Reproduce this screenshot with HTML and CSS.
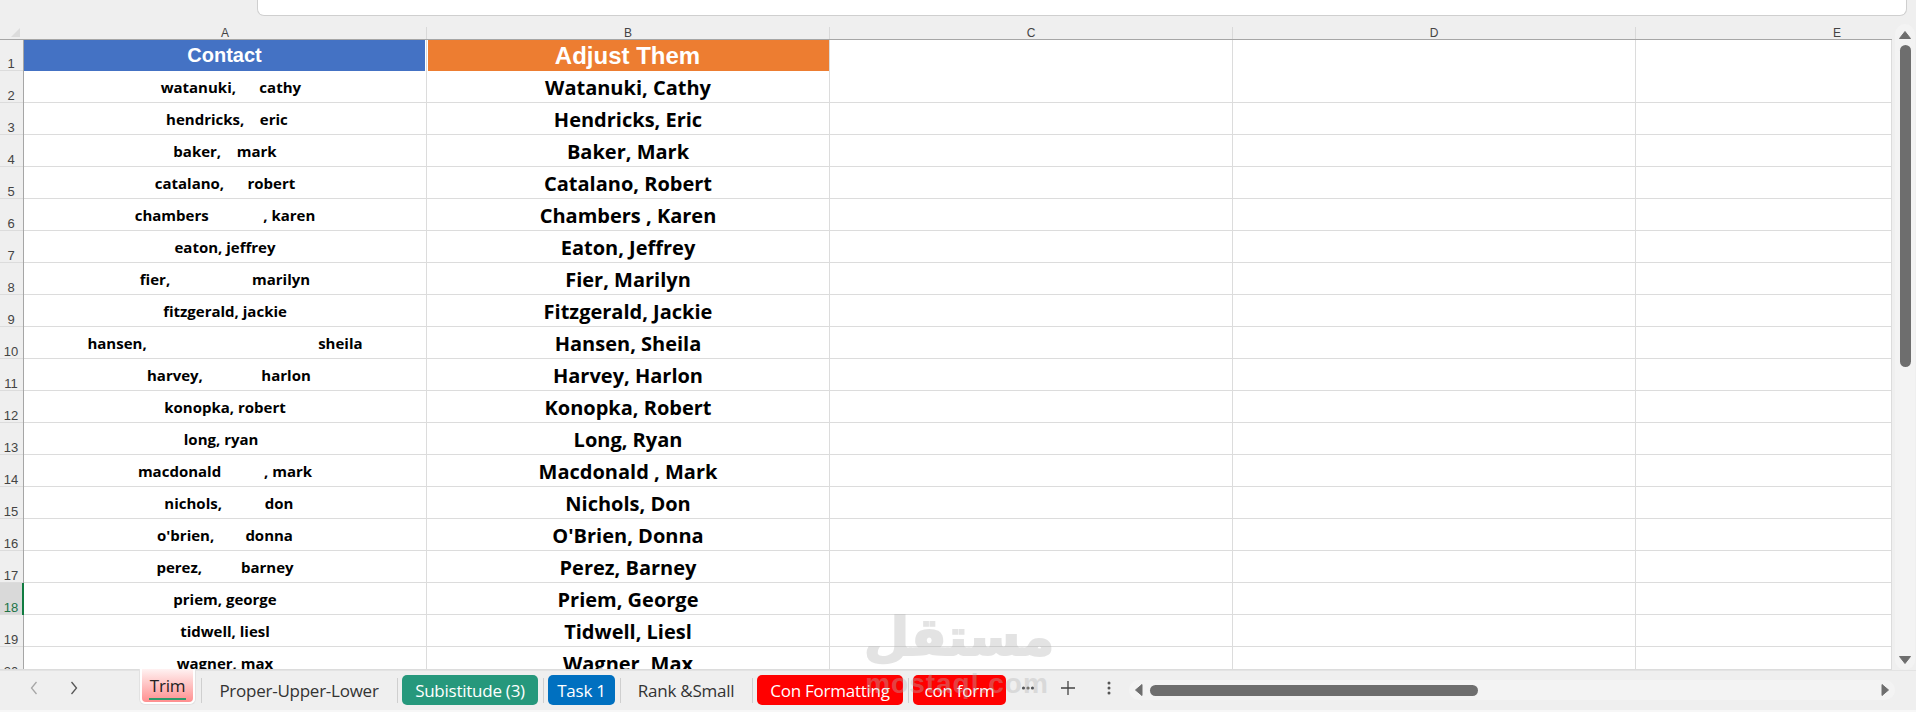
FILE: index.html
```html
<!DOCTYPE html>
<html lang="en">
<head>
<meta charset="utf-8">
<title>Trim</title>
<link rel="stylesheet" href="styles.css">
</head>
<body>
<div class="app">
  <div class="formula-box"></div>
  <div class="sheet">
    <div class="grid">
      <div class="col-heads">
        <div class="corner"><span class="corner-tri"></span></div>
        <div class="col-head">A</div>
        <div class="col-head">B</div>
        <div class="col-head">C</div>
        <div class="col-head">D</div>
        <div class="col-head col-last">E</div>
      </div>
      <div class="rows">
        <div class="row row-first"><div class="num">1</div><div class="cell"><span class="title title-blue">Contact</span></div><div class="cell"><span class="title title-orange">Adjust Them</span></div><div class="cell"></div><div class="cell"></div><div class="cell cell-last"></div></div>
        <div class="row"><div class="num">2</div><div class="cell raw">   watanuki,      cathy</div><div class="cell fixed">Watanuki, Cathy</div><div class="cell"></div><div class="cell"></div><div class="cell cell-last"></div></div>
        <div class="row"><div class="num">3</div><div class="cell raw"> hendricks,    eric</div><div class="cell fixed">Hendricks, Eric</div><div class="cell"></div><div class="cell"></div><div class="cell cell-last"></div></div>
        <div class="row"><div class="num">4</div><div class="cell raw">baker,    mark</div><div class="cell fixed">Baker, Mark</div><div class="cell"></div><div class="cell"></div><div class="cell cell-last"></div></div>
        <div class="row"><div class="num">5</div><div class="cell raw">catalano,      robert</div><div class="cell fixed">Catalano, Robert</div><div class="cell"></div><div class="cell"></div><div class="cell cell-last"></div></div>
        <div class="row"><div class="num">6</div><div class="cell raw">chambers              , karen</div><div class="cell fixed">Chambers , Karen</div><div class="cell"></div><div class="cell"></div><div class="cell cell-last"></div></div>
        <div class="row"><div class="num">7</div><div class="cell raw">eaton, jeffrey</div><div class="cell fixed">Eaton, Jeffrey</div><div class="cell"></div><div class="cell"></div><div class="cell cell-last"></div></div>
        <div class="row"><div class="num">8</div><div class="cell raw">fier,                     marilyn</div><div class="cell fixed">Fier, Marilyn</div><div class="cell"></div><div class="cell"></div><div class="cell cell-last"></div></div>
        <div class="row"><div class="num">9</div><div class="cell raw">fitzgerald, jackie</div><div class="cell fixed">Fitzgerald, Jackie</div><div class="cell"></div><div class="cell"></div><div class="cell cell-last"></div></div>
        <div class="row"><div class="num">10</div><div class="cell raw">hansen,                                            sheila</div><div class="cell fixed">Hansen, Sheila</div><div class="cell"></div><div class="cell"></div><div class="cell cell-last"></div></div>
        <div class="row"><div class="num">11</div><div class="cell raw">  harvey,               harlon</div><div class="cell fixed">Harvey, Harlon</div><div class="cell"></div><div class="cell"></div><div class="cell cell-last"></div></div>
        <div class="row"><div class="num">12</div><div class="cell raw">konopka, robert</div><div class="cell fixed">Konopka, Robert</div><div class="cell"></div><div class="cell"></div><div class="cell cell-last"></div></div>
        <div class="row"><div class="num">13</div><div class="cell raw">long, ryan  </div><div class="cell fixed">Long, Ryan</div><div class="cell"></div><div class="cell"></div><div class="cell cell-last"></div></div>
        <div class="row"><div class="num">14</div><div class="cell raw">macdonald           , mark</div><div class="cell fixed">Macdonald , Mark</div><div class="cell"></div><div class="cell"></div><div class="cell cell-last"></div></div>
        <div class="row"><div class="num">15</div><div class="cell raw">  nichols,           don</div><div class="cell fixed">Nichols, Don</div><div class="cell"></div><div class="cell"></div><div class="cell cell-last"></div></div>
        <div class="row"><div class="num">16</div><div class="cell raw">o'brien,        donna</div><div class="cell fixed">O'Brien, Donna</div><div class="cell"></div><div class="cell"></div><div class="cell cell-last"></div></div>
        <div class="row"><div class="num">17</div><div class="cell raw">perez,          barney</div><div class="cell fixed">Perez, Barney</div><div class="cell"></div><div class="cell"></div><div class="cell cell-last"></div></div>
        <div class="row"><div class="num num-selected">18</div><div class="cell raw">priem, george</div><div class="cell fixed">Priem, George</div><div class="cell"></div><div class="cell"></div><div class="cell cell-last"></div></div>
        <div class="row"><div class="num">19</div><div class="cell raw">tidwell, liesl</div><div class="cell fixed">Tidwell, Liesl</div><div class="cell"></div><div class="cell"></div><div class="cell cell-last"></div></div>
        <div class="row"><div class="num">20</div><div class="cell raw">wagner, max</div><div class="cell fixed">Wagner, Max</div><div class="cell"></div><div class="cell"></div><div class="cell cell-last"></div></div>
      </div>
    </div>
    <div class="vscroll">
      <svg class="arrow" width="12" height="8" viewBox="0 0 12 8"><path d="M6 .5 11.5 7.5H.5Z" fill="#6e6e6e" stroke="#6e6e6e" stroke-linejoin="round"/></svg>
      <div class="vtrack"><div class="vthumb"></div></div>
      <svg class="arrow" width="12" height="8" viewBox="0 0 12 8"><path d="M.5 .5H11.5L6 7.5Z" fill="#6e6e6e" stroke="#6e6e6e" stroke-linejoin="round"/></svg>
    </div>
  </div>
  <div class="tabbar">
    <div class="nav">
      <svg width="10" height="16" viewBox="0 0 10 16"><path d="M7.5 2 2.5 8l5 6" fill="none" stroke="#a6a6a6" stroke-width="1.3"/></svg>
      <svg width="10" height="16" viewBox="0 0 10 16"><path d="M2.5 2l5 6-5 6" fill="none" stroke="#555" stroke-width="1.3"/></svg>
    </div>
    <div class="tabs">
      <div class="tab-active"><span class="tab-active-label">Trim</span></div>
      <span class="sep"></span>
      <div class="tab tab-plain tab-proper">Proper-Upper-Lower</div>
      <span class="sep"></span>
      <div class="tab tab-green">Subistitude (3)</div>
      <span class="sep"></span>
      <div class="tab tab-blue">Task 1</div>
      <span class="sep"></span>
      <div class="tab tab-plain tab-rank">Rank &amp;Small</div>
      <span class="sep"></span>
      <div class="tab tab-red tab-cf">Con Formatting</div>
      <span class="sep"></span>
      <div class="tab tab-red tab-form">con form</div>
    </div>
    <div class="tab-tools">
      <svg class="tool-more" width="14" height="4" viewBox="0 0 14 4"><g fill="#555"><circle cx="2.5" cy="2" r="1.6"/><circle cx="7" cy="2" r="1.6"/><circle cx="11.5" cy="2" r="1.6"/></g></svg>
      <svg class="tool-add" width="14" height="14" viewBox="0 0 14 14"><path d="M7 0v14M0 7h14" stroke="#444" stroke-width="1.3"/></svg>
      <svg class="tool-menu" width="4" height="14" viewBox="0 0 4 14"><g fill="#555"><circle cx="2" cy="2" r="1.5"/><circle cx="2" cy="7" r="1.5"/><circle cx="2" cy="12" r="1.5"/></g></svg>
    </div>
    <div class="hscroll">
      <svg width="8" height="12" viewBox="0 0 8 12"><path d="M7 .5V11.5L.5 6Z" fill="#6e6e6e" stroke="#6e6e6e" stroke-linejoin="round"/></svg>
      <div class="htrack"><div class="hthumb"></div></div>
      <svg width="8" height="12" viewBox="0 0 8 12"><path d="M1 .5V11.5L7.5 6Z" fill="#6e6e6e" stroke="#6e6e6e" stroke-linejoin="round"/></svg>
    </div>
  </div>
  <div class="status-edge"></div>
  <div class="watermark"><div class="wm-ar">مستقل</div><div class="wm-en">mostaql.com</div></div>
</div>
</body>
</html>
```

FILE: styles.css
```css
* { box-sizing: border-box; }
html, body { margin: 0; height: 100%; }
body { overflow: hidden; background: #efefef; font-family: "Open Sans", "Liberation Sans", sans-serif; }
.app { position: relative; width: 1916px; height: 712px; display: flex; flex-direction: column; }

.formula-box { height: 16px; margin: 0 9px 0 257px; flex: none; background: #fff; border: 1px solid #cfcfcf; border-top: 0; border-radius: 0 0 7px 7px; }

.sheet { display: flex; height: 646px; margin-top: 8px; flex: none; }
.grid { width: 1892px; display: flex; flex-direction: column; padding-top: 3px; min-height: 0; }

.col-heads { display: flex; height: 13px; flex: none; border-bottom: 1px solid #a6a6a6; }
.corner { width: 24px; flex: none; display: flex; justify-content: flex-end; padding: 1px 4px 0 0; }
.corner-tri { width: 0; height: 0; border-style: solid; border-width: 0 0 9px 9px; border-color: transparent transparent #dcdcdc transparent; }
.col-head { width: 403px; flex: none; text-align: center; font: 12px/12px "Liberation Sans", sans-serif; color: #444; border-right: 1px solid #d9d9d9; }
.col-last { flex: 1; width: auto; border-right: 0; text-align: left; padding-left: 197px; }

.rows { flex: 1; min-height: 0; overflow: hidden; border-bottom: 1px solid #dcdcdc; }
.row { display: flex; height: 32px; }
.row-first { height: 31px; }
.num { width: 24px; flex: none; border-right: 1px solid #a6a6a6; background: #efefef; font: 13px/14px "Liberation Sans", sans-serif; color: #444; display: flex; align-items: flex-end; justify-content: center; padding: 0 1px 0 0; box-shadow: inset 0 -1px 0 #dcdcdc; }
.num-selected { background: #d9d9d9; color: #217346; border-right: 2px solid #107c41; padding-right: 0; }
.cell { width: 403px; flex: none; background: #fff; border-right: 1px solid #dcdcdc; border-bottom: 1px solid #dcdcdc; display: flex; align-items: center; justify-content: center; white-space: pre; color: #000; font-weight: 700; }
.cell-last { flex: 1; }
.raw { font-size: 15px; }
.fixed { font-size: 20px; padding-top: 1px; }
.row-first .cell { border-bottom: 0; }
.title { display: flex; align-items: center; justify-content: center; height: 100%; width: 100%; color: #fff; font-family: "Liberation Sans", sans-serif; font-weight: 700; }
.title-blue { background: #4472c4; font-size: 20px; margin-right: 1px; }
.title-orange { background: #ed7d31; font-size: 24px; margin-left: 1px; padding-right: 2px; }

.vscroll { width: 20px; margin-left: 3px; background: #f3f3f3; border-radius: 10px; display: flex; flex-direction: column; align-items: center; padding: 7px 0 6px; }
.vscroll .arrow { flex: none; }
.vtrack { flex: 1; width: 100%; padding: 6px 4px 0; min-height: 0; }
.vthumb { width: 11px; margin: 0 auto; height: 322px; background: #6e6e6e; border-radius: 6px; }

.tabbar { height: 40px; flex: none; display: flex; align-items: flex-start; background: #efefef; border-top: 1px solid #e3e3e3; position: relative; }
.nav { width: 139px; flex: none; display: flex; padding: 9px 0 0 29px; gap: 30px; }
.tabs { display: flex; align-items: flex-end; flex: none; height: 34px; }
.tab-active { width: 57px; height: 36px; margin-top: -2px; padding: 0 2px 2px; background: #fff; border: 1px solid #e2e2e2; border-top: 0; border-radius: 0 0 6px 6px; display: flex; flex: none; }
.tab-active-label { flex: 1; border-radius: 0 0 4px 4px; background: linear-gradient(#fff2f2, #ff8f8f); font-size: 17px; line-height: 33px; text-align: center; color: #222; position: relative; letter-spacing: -.25px; }
.tab-active-label::after { content: ""; position: absolute; left: 7px; right: 7px; bottom: 2px; height: 2px; background: #2c9a6b; }
.sep { width: 1px; height: 25px; background: #cfcfcf; flex: none; margin: 0 4px 2px 5px; }
.tab { height: 30px; border-radius: 5px; display: flex; align-items: center; justify-content: center; font-size: 17px; letter-spacing: -.25px; white-space: nowrap; flex: none; }
.tab-plain { color: #333; }
.tab-proper { width: 186px; }
.tab-rank { width: 122px; }
.tab-green { width: 136px; background: #26987c; color: #fff; }
.tab-blue { width: 67px; background: #0070c0; color: #fff; }
.tab-red { background: #ff0000; color: #fff; }
.tab-cf { width: 146px; }
.tab-form { width: 93px; }
.tab-tools { flex: none; width: 123px; height: 34px; display: flex; align-items: center; padding-left: 15px; }
.tool-add { margin-left: 26px; }
.tool-menu { margin-left: 32px; }
.hscroll { width: 766px; height: 20px; margin-top: 9px; background: #f3f3f3; border-radius: 10px; display: flex; align-items: center; padding: 0 6px; }
.htrack { flex: 1; padding: 0 7px; }
.hthumb { width: 328px; height: 11px; background: #6e6e6e; border-radius: 6px; }
.status-edge { flex: 1; background: #f7f7f7; }

.watermark { position: absolute; left: 864px; top: 604px; width: 186px; text-align: center; color: #b4b4b4; opacity: .36; pointer-events: none; }
.wm-ar { font: 700 52px/66px "DejaVu Sans", sans-serif; -webkit-text-stroke: 2px #b4b4b4; }
.wm-en { font: 700 28px/28px "Liberation Sans", sans-serif; letter-spacing: 1px; }
```
